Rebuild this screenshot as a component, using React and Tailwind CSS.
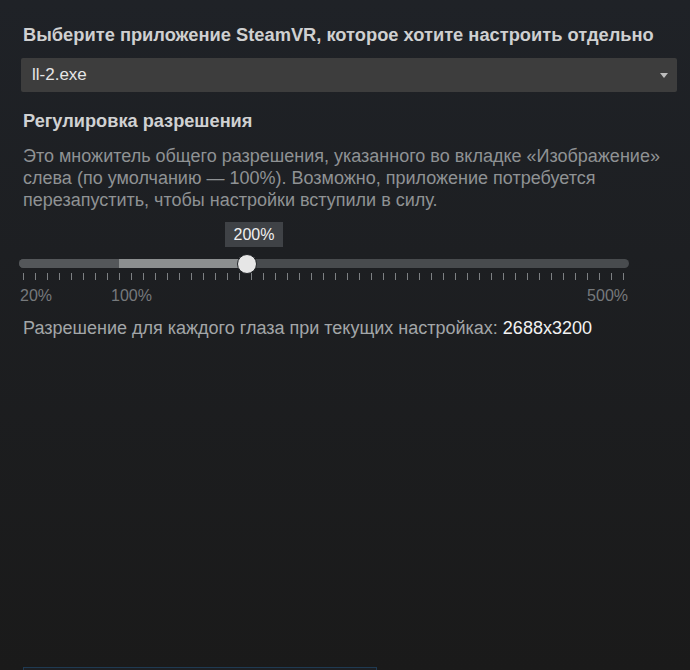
import React from "react";

const font = { fontFamily: "'Liberation Sans', Arial, sans-serif" };

const ticks = Array.from({ length: 51 }, (_, i) => i);

function Slider() {
  return (
    <div className="relative mt-[11px] w-[610px] ml-[19px]">
      {/* value bubble */}
      <div className="h-[26px] flex">
        <div className="ml-[206px] w-[58px] h-[25px] bg-[#3f4246] text-[#f0f0f0] text-[16px] leading-[25px] text-center">
          200%
        </div>
      </div>
      {/* track */}
      <div className="relative mt-[11px] h-[9px] rounded-full bg-[#484b4e] flex overflow-hidden">
        <div className="w-[100px] h-full bg-[#54575a]" />
        <div className="w-[128px] h-full bg-[#8c8f90]" />
      </div>
      <div className="absolute left-[218px] top-[32px] w-[20px] h-[20px] rounded-full bg-[#e6e6e6] border border-[#202326]" />
      {/* ticks */}
      <div className="flex mt-[5px] ml-[4px]">
        {ticks.map((t) => (
          <div key={t} className="w-[12px] shrink-0">
            <div className="w-px h-[7px] bg-[#7d8083]" />
          </div>
        ))}
      </div>
      <div className="relative h-[20px] mt-[4px] text-[16px] text-[#76797c]">
        <span className="absolute left-[1px] top-0">20%</span>
        <span className="absolute left-[92px] top-0">100%</span>
        <span className="absolute right-[1px] top-0">500%</span>
      </div>
    </div>
  );
}

export default function App() {
  return (
    <div
      className="w-[690px] h-[670px] overflow-hidden flex flex-col bg-gradient-to-b from-[#1f2227] to-[#1a1a1a]"
      style={font}
    >
      <div className="pt-[24px] px-[21px]">
        <h1 className="pl-[2px] text-[18.3px] font-bold text-[#cfd0d1] leading-[22px] whitespace-nowrap">
          Выберите приложение SteamVR, которое хотите настроить отдельно
        </h1>

        <div className="mt-[12px] h-[34px] w-[656px] bg-[#3d3d3d] rounded-[2px] flex items-center justify-between pl-[11px] pr-[9px]">
          <span className="text-[17px] text-[#e6e6e6]">ll-2.exe</span>
          <svg width="8" height="5" viewBox="0 0 8 5">
            <path d="M0 0 H8 L4 5 Z" fill="#bdbdbd" />
          </svg>
        </div>

        <h2 className="mt-[18px] pl-[2px] text-[18.2px] font-bold text-[#d0d1d2] leading-[22px]">
          Регулировка разрешения
        </h2>

        <p className="mt-[13px] pl-[2px] text-[18px] leading-[22px] text-[#8f9294] w-[645px]">
          Это множитель общего разрешения, указанного во вкладке «Изображение»
          слева (по умолчанию — 100%). Возможно, приложение потребуется
          перезапустить, чтобы настройки вступили в силу.
        </p>
      </div>

      <Slider />

      <div className="mt-[13px] pl-[23px] text-[18px] leading-[22px] text-[#a3a6a8]">
        Разрешение для каждого глаза при текущих настройках:{" "}
        <span className="text-[#f2f2f2]">2688x3200</span>
      </div>

      <div className="mt-auto ml-[23px] w-[354px] h-[3px] border-t border-x border-[#1f3a52] bg-[#1c1f23]" />
    </div>
  );
}
